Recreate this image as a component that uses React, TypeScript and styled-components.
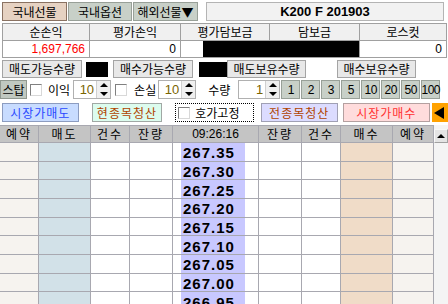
import styled, { createGlobalStyle } from "styled-components";

const GlobalStyle = createGlobalStyle`
  body {
    margin: 0;
    background: #ffffff;
  }
`;

const KR = `"Noto Sans CJK KR", "Liberation Sans", sans-serif`;
const NUM = `"Liberation Sans", Arial, sans-serif`;

const infoHeads = ["순손익", "평가손익", "평가담보금", "담보금", "로스컷"];
const quickQty = ["1", "2", "3", "5", "10", "20", "50", "100"];
const bookHeads = ["예약", "매도", "건수", "잔량", "09:26:16", "잔량", "건수", "매수", "예약"];
const prices = [
  "267.35",
  "267.30",
  "267.25",
  "267.20",
  "267.15",
  "267.10",
  "267.05",
  "267.00",
  "266.95",
];

const App = () => {
  return (
    <Page>
      <GlobalStyle />
      <TopBar>
        <Tab $w={65} $active>
          국내선물
        </Tab>
        <Tab $w={64}>국내옵션</Tab>
        <Tab $w={65}>해외선물▼</Tab>
        <TitleBox>K200 F 201903</TitleBox>
      </TopBar>

      <InfoTable>
        {infoHeads.map((h) => (
          <InfoHead key={h}>{h}</InfoHead>
        ))}
        <InfoValue $color="#ff0000">1,697,766</InfoValue>
        <InfoValue>0</InfoValue>
        <InfoValue $span={2}>
          <Redacted />
        </InfoValue>
        <InfoValue>0</InfoValue>
      </InfoTable>

      <QtyRow>
        <QtyLabel $w={80}>매도가능수량</QtyLabel>
        <QtyBox $w={22} $ml={4} $black />
        <QtyLabel $w={80} $ml={5}>
          매수가능수량
        </QtyLabel>
        <QtyBox $w={28} $ml={6} $black />
        <QtyLabel $w={79}>매도보유수량</QtyLabel>
        <QtyBox $w={28} />
        <QtyLabel $w={79} $ml={3}>
          매수보유수량
        </QtyLabel>
        <QtyBox $w={30} />
      </QtyRow>

      <StopRow>
        <StopButton>스탑</StopButton>
        <CheckBox $ml={3} />
        <RowText $ml={6}>이익</RowText>
        <Spin $w={38} $ml={3}>
          <SpinValue>10</SpinValue>
          <SpinArrows>
            <Arrow $up />
            <Arrow />
          </SpinArrows>
        </Spin>
        <CheckBox $ml={4} />
        <RowText $ml={7}>손실</RowText>
        <Spin $w={38} $ml={2}>
          <SpinValue>10</SpinValue>
          <SpinArrows>
            <Arrow $up />
            <Arrow />
          </SpinArrows>
        </Spin>
        <RowText $ml={12}>수량</RowText>
        <Spin $w={42} $ml={8}>
          <SpinValue>1</SpinValue>
          <SpinArrows>
            <Arrow $up />
            <Arrow />
          </SpinArrows>
        </Spin>
        <QuickGroup>
          {quickQty.map((q) => (
            <QuickButton key={q}>{q}</QuickButton>
          ))}
        </QuickGroup>
      </StopRow>

      <OrderRow>
        <OrderButton $w={77} $bg="#c8dcff" $fg="#2848ff" $bd="#8c9cc0">
          시장가매도
        </OrderButton>
        <OrderButton $w={71} $ml={13} $bg="#dcfcee" $fg="#b04400" $bd="#a0a8a4">
          현종목청산
        </OrderButton>
        <HogaFix>
          <CheckBox />
          <RowText $ml={5}>호가고정</RowText>
        </HogaFix>
        <OrderButton $w={77} $ml={7} $bg="#dcdcff" $fg="#b04400" $bd="#a0a0b4">
          전종목청산
        </OrderButton>
        <OrderButton $w={88} $ml={5} $bg="#ffdcdc" $fg="#ff3030" $bd="#b4a0a0">
          시장가매수
        </OrderButton>
        <OrangeButton>
          <LeftTri />
        </OrangeButton>
      </OrderRow>

      <Book>
        <BookGrid>
          {bookHeads.map((h, i) => (
            <HeadCell key={i} $num={i === 4}>
              {h}
            </HeadCell>
          ))}
          {prices.map((p) => (
            <BookRow key={p} price={p} />
          ))}
        </BookGrid>
        <ScrollBar>
          <UpButton>
            <UpTri />
          </UpButton>
        </ScrollBar>
      </Book>
    </Page>
  );
};

const BookRow = ({ price }: { price: string }) => (
  <>
    <DataCell $bg="#f6f3ef" />
    <DataCell $bg="#d2e1e8" />
    <DataCell />
    <DataCell />
    <PriceCell>
      <PriceBox>{price}</PriceBox>
    </PriceCell>
    <DataCell />
    <DataCell />
    <DataCell $bg="#f0dcc8" />
    <DataCell $bg="#f6f3ef" />
  </>
);

export default App;

const Page = styled.div`
  width: 448px;
  height: 304px;
  overflow: hidden;
  display: flex;
  flex-direction: column;
  font-family: ${KR};
  font-size: 12px;
  color: #000;
  background: #fff;
`;

const TopBar = styled.div`
  display: flex;
  align-items: center;
  gap: 1px;
  height: 19px;
  padding: 2px 0 0 2px;
`;

const Tab = styled.div<{ $w: number; $active?: boolean }>`
  width: ${(p) => p.$w}px;
  height: 19px;
  box-sizing: border-box;
  border: 1px solid ${(p) => (p.$active ? "#8a7262" : "#98a098")};
  background: ${(p) => (p.$active ? "#e6d2c2" : "#c8d0c8")};
  display: flex;
  align-items: center;
  justify-content: center;
  line-height: 1;
  font-size: 12px;
`;

const TitleBox = styled.div`
  margin-left: 7px;
  width: 238px;
  height: 19px;
  box-sizing: border-box;
  border: 1px solid #b4b4b4;
  background: #f2f2f2;
  display: flex;
  align-items: center;
  justify-content: center;
  font-family: ${NUM};
  font-weight: bold;
  font-size: 13px;
`;

const InfoTable = styled.div`
  margin: 2px 0 0 2px;
  width: max-content;
  display: grid;
  grid-template-columns: 86px 90px 88px 89px 86px;
  grid-template-rows: 16px 16px;
  gap: 1px;
  padding: 1px;
  background: #a0a0a0;
`;

const InfoHead = styled.div`
  background: #f0f0f0;
  display: flex;
  align-items: center;
  justify-content: center;
  line-height: 1;
`;

const InfoValue = styled.div<{ $color?: string; $span?: number }>`
  grid-column: span ${(p) => p.$span ?? 1};
  background: #fff;
  display: flex;
  align-items: center;
  justify-content: flex-end;
  padding-right: ${(p) => (p.$span ? 0 : 4)}px;
  color: ${(p) => p.$color ?? "#000"};
  font-family: ${NUM};
  font-size: 12px;
`;

const Redacted = styled.div`
  margin-left: 22px;
  flex: 1;
  height: 100%;
  background: #000;
`;

const QtyRow = styled.div`
  display: flex;
  align-items: center;
  margin-top: 2px;
  padding-left: 2px;
  height: 18px;
`;

const QtyLabel = styled.div<{ $w: number; $ml?: number }>`
  width: ${(p) => p.$w}px;
  margin-left: ${(p) => p.$ml ?? 0}px;
  height: 18px;
  box-sizing: border-box;
  border: 1px solid #a4a4a4;
  background: #e8e8e8;
  display: flex;
  align-items: center;
  justify-content: center;
  line-height: 1;
`;

const QtyBox = styled.div<{ $w: number; $ml?: number; $black?: boolean }>`
  width: ${(p) => p.$w}px;
  margin-left: ${(p) => p.$ml ?? 0}px;
  height: ${(p) => (p.$black ? 15 : 18)}px;
  background: ${(p) => (p.$black ? "#000" : "#fff")};
`;

const StopRow = styled.div`
  display: flex;
  align-items: center;
  margin-top: 2px;
  height: 19px;
`;

const StopButton = styled.div`
  width: 27px;
  height: 19px;
  box-sizing: border-box;
  border: 1px solid #909890;
  background: #c0c8c0;
  display: flex;
  align-items: center;
  justify-content: center;
  line-height: 1;
`;

const CheckBox = styled.span<{ $ml?: number }>`
  display: inline-block;
  flex: none;
  width: 12px;
  height: 12px;
  margin-left: ${(p) => p.$ml ?? 0}px;
  box-sizing: border-box;
  background: #fff;
  border: 1px solid #d8d8d8;
  border-top-color: #808080;
  border-left-color: #808080;
`;

const RowText = styled.span<{ $ml?: number }>`
  margin-left: ${(p) => p.$ml ?? 0}px;
  line-height: 1;
  white-space: nowrap;
`;

const Spin = styled.div<{ $w: number; $ml?: number }>`
  width: ${(p) => p.$w}px;
  margin-left: ${(p) => p.$ml ?? 0}px;
  height: 19px;
  box-sizing: border-box;
  border: 1px solid #b0b0b0;
  background: #fff;
  display: flex;
`;

const SpinValue = styled.div`
  flex: 1;
  display: flex;
  align-items: center;
  justify-content: flex-end;
  padding-right: 2px;
  color: #7a6400;
  font-family: ${NUM};
  font-size: 13px;
`;

const SpinArrows = styled.div`
  width: 13px;
  display: flex;
  flex-direction: column;
  background: #f0f0f0;
  border-left: 1px solid #d0d0d0;
`;

const Arrow = styled.div<{ $up?: boolean }>`
  flex: 1;
  display: flex;
  align-items: center;
  justify-content: center;

  &::after {
    content: "";
    border-left: 4px solid transparent;
    border-right: 4px solid transparent;
    ${(p) =>
      p.$up ? "border-bottom: 4px solid #000;" : "border-top: 4px solid #000;"}
  }
`;

const QuickGroup = styled.div`
  display: flex;
  gap: 1px;
  margin-left: 1px;
`;

const QuickButton = styled.div`
  width: 19px;
  height: 19px;
  box-sizing: border-box;
  border: 1px solid #98a098;
  background: #c8d0c8;
  display: flex;
  align-items: center;
  justify-content: center;
  font-family: ${NUM};
  font-size: 12px;
  letter-spacing: -0.5px;
`;

const OrderRow = styled.div`
  display: flex;
  align-items: center;
  margin-top: 4px;
  padding-left: 2px;
  height: 19px;
`;

const OrderButton = styled.div<{
  $w: number;
  $ml?: number;
  $bg: string;
  $fg: string;
  $bd: string;
}>`
  width: ${(p) => p.$w}px;
  margin-left: ${(p) => p.$ml ?? 0}px;
  height: 19px;
  box-sizing: border-box;
  border: 1px solid ${(p) => p.$bd};
  background: ${(p) => p.$bg};
  color: ${(p) => p.$fg};
  display: flex;
  align-items: center;
  justify-content: center;
  line-height: 1;
  font-size: 12px;
  letter-spacing: 1px;
`;

const HogaFix = styled.div`
  margin-left: 13px;
  width: 79px;
  height: 19px;
  box-sizing: border-box;
  border: 1px dotted #000;
  display: flex;
  align-items: center;
  padding-left: 2px;
`;

const OrangeButton = styled.div`
  margin-left: 2px;
  width: 16px;
  height: 19px;
  background: #ffa200;
  display: flex;
  align-items: center;
  padding-left: 2px;
  box-sizing: border-box;
`;

const LeftTri = styled.span`
  border-top: 6px solid transparent;
  border-bottom: 6px solid transparent;
  border-right: 10px solid #000;
`;

const Book = styled.div`
  display: flex;
  margin-top: 3px;
  flex: 1;
  min-height: 0;
`;

const BookGrid = styled.div`
  display: grid;
  grid-template-columns: 38px 51px 38px 42px 85px 42px 38px 51px 40px;
  grid-template-rows: 16px;
  grid-auto-rows: 17.67px;
  gap: 1px;
  padding: 1px 1px 0 0;
  background: #a8a8b0;
  align-self: flex-start;
`;

const HeadCell = styled.div<{ $num?: boolean }>`
  background: #c4c4c4;
  display: flex;
  align-items: center;
  justify-content: center;
  line-height: 1;
  font-family: ${(p) => (p.$num ? NUM : KR)};
  font-size: 12px;
  letter-spacing: ${(p) => (p.$num ? 0 : 2)}px;
`;

const DataCell = styled.div<{ $bg?: string }>`
  background: ${(p) => p.$bg ?? "#fff"};
`;

const PriceCell = styled.div`
  background: #fff;
  display: flex;
  padding-left: 8px;
`;

const PriceBox = styled.div`
  width: 64px;
  background: #c8c8ff;
  display: flex;
  align-items: center;
  padding: 2px 0 0 2px;
  box-sizing: border-box;
  font-family: ${NUM};
  font-weight: bold;
  font-size: 15px;
  letter-spacing: 1px;
  line-height: 1;
`;

const ScrollBar = styled.div`
  width: 14px;
  padding-top: 4px;
  background: #f4f4f4;
  display: flex;
  flex-direction: column;
`;

const UpButton = styled.div`
  width: 14px;
  height: 14px;
  box-sizing: border-box;
  border: 1px solid #a0a0a0;
  border-top-color: #f8f8f8;
  border-left-color: #f8f8f8;
  background: #e4e4e4;
  display: flex;
  align-items: center;
  justify-content: center;
`;

const UpTri = styled.span`
  border-left: 4px solid transparent;
  border-right: 4px solid transparent;
  border-bottom: 4px solid #000;
`;
